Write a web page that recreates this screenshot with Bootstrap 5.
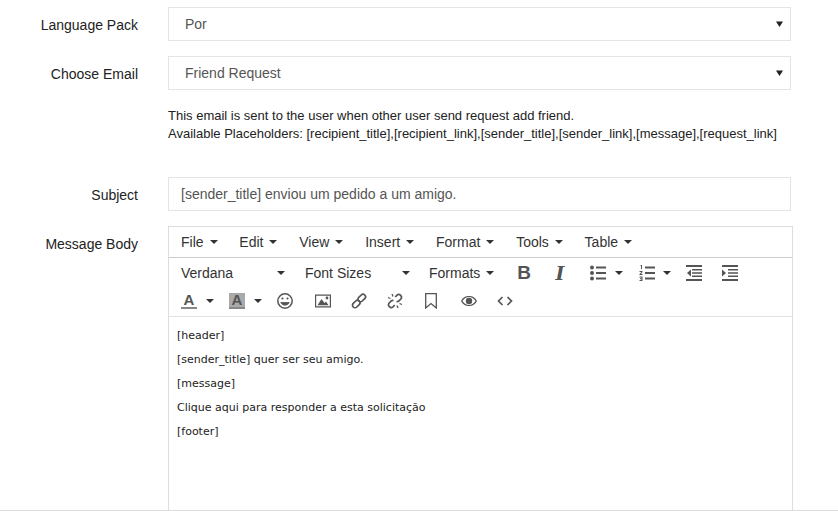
<!DOCTYPE html>
<html lang="en">
<head>
<meta charset="utf-8">
<title>Email Templates</title>
<link rel="stylesheet" href="https://cdn.jsdelivr.net/npm/bootstrap@5.3.0/dist/css/bootstrap.min.css">
<style>
html,body{height:511px;overflow:hidden;background:#fff}
body{font-family:"Liberation Sans",Arial,sans-serif;font-size:14px;color:#222}
.pg{height:511px;border-bottom:1px solid #ddd;padding-top:7px;overflow:hidden}
.frow{display:flex;margin-bottom:15px}
.lbl{width:138px;margin-right:30px;text-align:right;line-height:20px;padding-top:8px;color:#222;flex:none;margin-bottom:0}
.lbl-over{position:absolute}
.fld{width:623px;flex:none}
.form-select.sel,.form-control.inp{border:1px solid #e4e4e4;border-radius:0;height:34px;font-size:14px;color:#555;box-shadow:none;line-height:20px;padding:6px 20px 6px 16px}
.form-control.inp{padding-left:12px}
.form-select.sel{background-image:url("data:image/svg+xml,%3Csvg xmlns='http://www.w3.org/2000/svg' width='7' height='6'%3E%3Cpath d='M0 .5h7L3.500 6z' fill='%23222'/%3E%3C/svg%3E");background-size:7px 6px;background-position:right 7px center}
.help{margin:0;font-size:13px;line-height:18px;color:#222}
.helpwrap{margin:17px 0 34px 168px;width:640px}
.ed{margin-left:168px;width:625px;border:1px solid #ddd;border-bottom:0;height:290px}
.mbar{height:31px;border-bottom:1px solid #ccc;padding-left:12px;display:flex;align-items:center;gap:21.800px;color:#333}
.mi{display:flex;align-items:center;gap:6px;line-height:20px}
.car{display:inline-block;width:0;height:0;border:4px solid transparent;border-top-color:#333;border-bottom:0;flex:none}
.tb{height:59px;border-bottom:1px solid #e2e2e2;padding-left:12px;color:#333}
.tr1,.tr2{display:flex;align-items:center}
.tr1{height:30px}
.tr2{height:26px}
.ic{width:16px;height:16px;flex:none;display:block;color:#555}
.pick{display:flex;align-items:center;justify-content:space-between;line-height:20px}
.gb{font-weight:700;font-size:19px;line-height:16px;color:#555;width:16px;text-align:center;flex:none}
.gi{font-family:"DejaVu Serif",serif;font-style:italic;font-weight:700;font-size:19px;line-height:16px;color:#555;width:16px;text-align:center;flex:none}
.ga{font-weight:700;font-size:15px;line-height:14px;color:#555;width:16px;height:16px;text-align:center;border-bottom:2px solid #888;flex:none;display:block}
.gah{background:#aaa}
.body-ed{padding:12px 8px;font-family:"DejaVu Sans",Verdana,sans-serif;font-size:11px;line-height:14px;color:#222}
.body-ed p{margin:0 0 10px}
.m9{margin-left:9px}.m15{margin-left:15px}.m20{margin-left:20px}.m22{margin-left:22px}
.m19{margin-left:19px}.m16{margin-left:16px}.m8{margin-left:8px}
.w104{width:104px}.w105{width:105px}.w65{width:65px}
</style>
</head>
<body>
<div class="pg">
  <form>
    <div class="frow">
      <label class="lbl" for="s1">Language Pack</label>
      <div class="fld"><select id="s1" class="form-select sel"><option>Por</option></select></div>
    </div>
    <div class="frow mb-0">
      <label class="lbl" for="s2">Choose Email</label>
      <div class="fld"><select id="s2" class="form-select sel"><option>Friend Request</option></select></div>
    </div>
    <div class="helpwrap">
      <p class="help">This email is sent to the user when other user send request add friend.<br>Available Placeholders: [recipient_title],[recipient_link],[sender_title],[sender_link],[message],[request_link]</p>
    </div>
    <div class="frow">
      <label class="lbl" for="s3">Subject</label>
      <div class="fld"><input id="s3" class="form-control inp" value="[sender_title] enviou um pedido a um amigo."></div>
    </div>
    <div class="d-flex">
      <label class="lbl lbl-over">Message Body</label>
      <div class="ed">
        <div class="mbar">
          <span class="mi">File<i class="car"></i></span>
          <span class="mi">Edit<i class="car"></i></span>
          <span class="mi">View<i class="car"></i></span>
          <span class="mi">Insert<i class="car"></i></span>
          <span class="mi">Format<i class="car"></i></span>
          <span class="mi">Tools<i class="car"></i></span>
          <span class="mi">Table<i class="car"></i></span>
        </div>
        <div class="tb">
          <div class="tr1">
            <span class="pick w104">Verdana<i class="car"></i></span>
            <span class="pick m20 w105">Font Sizes<i class="car"></i></span>
            <span class="pick m19 w65">Formats<i class="car"></i></span>
            <span class="gb m22">B</span>
            <span class="gi m20">I</span>
            <svg class="ic m22" viewBox="0 0 16 16" fill="currentColor"><circle cx="2" cy="2.500" r="2"/><circle cx="2" cy="8" r="2"/><circle cx="2" cy="13.500" r="2"/><path d="M6 1.500h10v2H6zM6 7h10v2H6zM6 12.500h10v2H6z"/></svg>
            <i class="car m9"></i>
            <svg class="ic m16" viewBox="0 0 16 16" fill="currentColor"><path d="M1.500 0h1.500v4H2V1h-.5zM.5 6h3v1L2 9h1.500v1H.5V9l2-2H.5zM.5 11.500h3v4.500h-3v-1h2v-.8h-1.500v-.9h1.500V12.500h-2zM6 1.500h10v2H6zM6 7h10v2H6zM6 12.500h10v2H6z"/></svg>
            <i class="car m8"></i>
            <svg class="ic m15" viewBox="0 0 16 16" fill="currentColor"><path d="M0 0h16v2H0zM6 4h10v1.600H6zM6 7.200h10v1.600H6zM6 10.400h10v1.600H6zM0 14h16v2H0zM5 4.500v7L1 8z"/></svg>
            <svg class="ic m20" viewBox="0 0 16 16" fill="currentColor"><path d="M0 0h16v2H0zM6 4h10v1.600H6zM6 7.200h10v1.600H6zM6 10.400h10v1.600H6zM0 14h16v2H0zM0 4.500v7L4 8z"/></svg>
          </div>
          <div class="tr2">
            <span class="ga">A</span>
            <i class="car m9"></i>
            <span class="ga gah m15">A</span>
            <i class="car m9"></i>
            <svg class="ic m15" viewBox="0 0 16 16" fill="none" stroke="currentColor" stroke-width="1.500"><circle cx="8" cy="8" r="7.200"/><path d="M3.800 9.500c1 3.500 7.400 3.500 8.400 0z" fill="currentColor" stroke-width=".8"/><circle cx="5.500" cy="5.500" r="1.100" fill="currentColor" stroke="none"/><circle cx="10.500" cy="5.500" r="1.100" fill="currentColor" stroke="none"/></svg>
            <svg class="ic m22" viewBox="0 0 16 16" fill="currentColor"><path fill-rule="evenodd" d="M0 1.500h16v13H0zM1.200 2.700v10.600h13.600V2.700z"/><path d="M2.500 12.300 6.500 6l3 4 1.500-1.500 2.500 3.800z"/><circle cx="12" cy="5" r="1.400"/></svg>
            <svg class="ic m20" viewBox="0 0 16 16" fill="none" stroke="currentColor" stroke-width="1.700"><rect x="1" y="8.500" width="8.500" height="5" rx="2.500" transform="rotate(-45 5.250 11)"/><rect x="6.500" y="2.500" width="8.500" height="5" rx="2.500" transform="rotate(-45 10.750 5)"/></svg>
            <svg class="ic m20" viewBox="0 0 16 16" fill="none" stroke="currentColor" stroke-width="1.700"><path d="M8.300 4 10 2.200a2.700 2.700 0 0 1 3.800 3.800L12 7.800a2.700 2.700 0 0 1-2.500.7"/><path d="M7.700 12 6 13.800A2.700 2.700 0 0 1 2.200 10L4 8.200a2.700 2.700 0 0 1 2.500-.7"/><path d="M1 4.500 3.500 5.500M5 1l1 2.500M15 11.500 12.500 10.500M11 15l-1-2.500" stroke-width="1.300"/></svg>
            <svg class="ic m20" viewBox="0 0 16 16" fill="none" stroke="currentColor" stroke-width="1.300"><path d="M2.700.7h10.600v14.300L8 10.500 2.700 15z"/></svg>
            <svg class="ic m22" viewBox="0 0 16 16" fill="currentColor"><path fill-rule="evenodd" d="M0 8c2-3.800 5-5 8-5s6 1.200 8 5c-2 3.800-5 5-8 5s-6-1.200-8-5zm1.500 0c1.700 2.700 4 3.900 6.500 3.900s4.800-1.200 6.500-3.900C12.800 5.300 10.500 4.100 8 4.100S3.200 5.300 1.500 8z"/><circle cx="8" cy="8" r="3.200"/></svg>
            <svg class="ic m20" viewBox="0 0 16 16" fill="none" stroke="currentColor" stroke-width="1.700"><path d="M5.500 4 1.500 8l4 4M10.500 4l4 4-4 4"/></svg>
          </div>
        </div>
        <div class="body-ed">
          <p>[header]</p>
          <p>[sender_title] quer ser seu amigo.</p>
          <p>[message]</p>
          <p>Clique aqui para responder a esta solicitação</p>
          <p>[footer]</p>
        </div>
      </div>
    </div>
  </form>
</div>
<script src="https://cdn.jsdelivr.net/npm/bootstrap@5.3.0/dist/js/bootstrap.bundle.min.js"></script>
</body>
</html>
